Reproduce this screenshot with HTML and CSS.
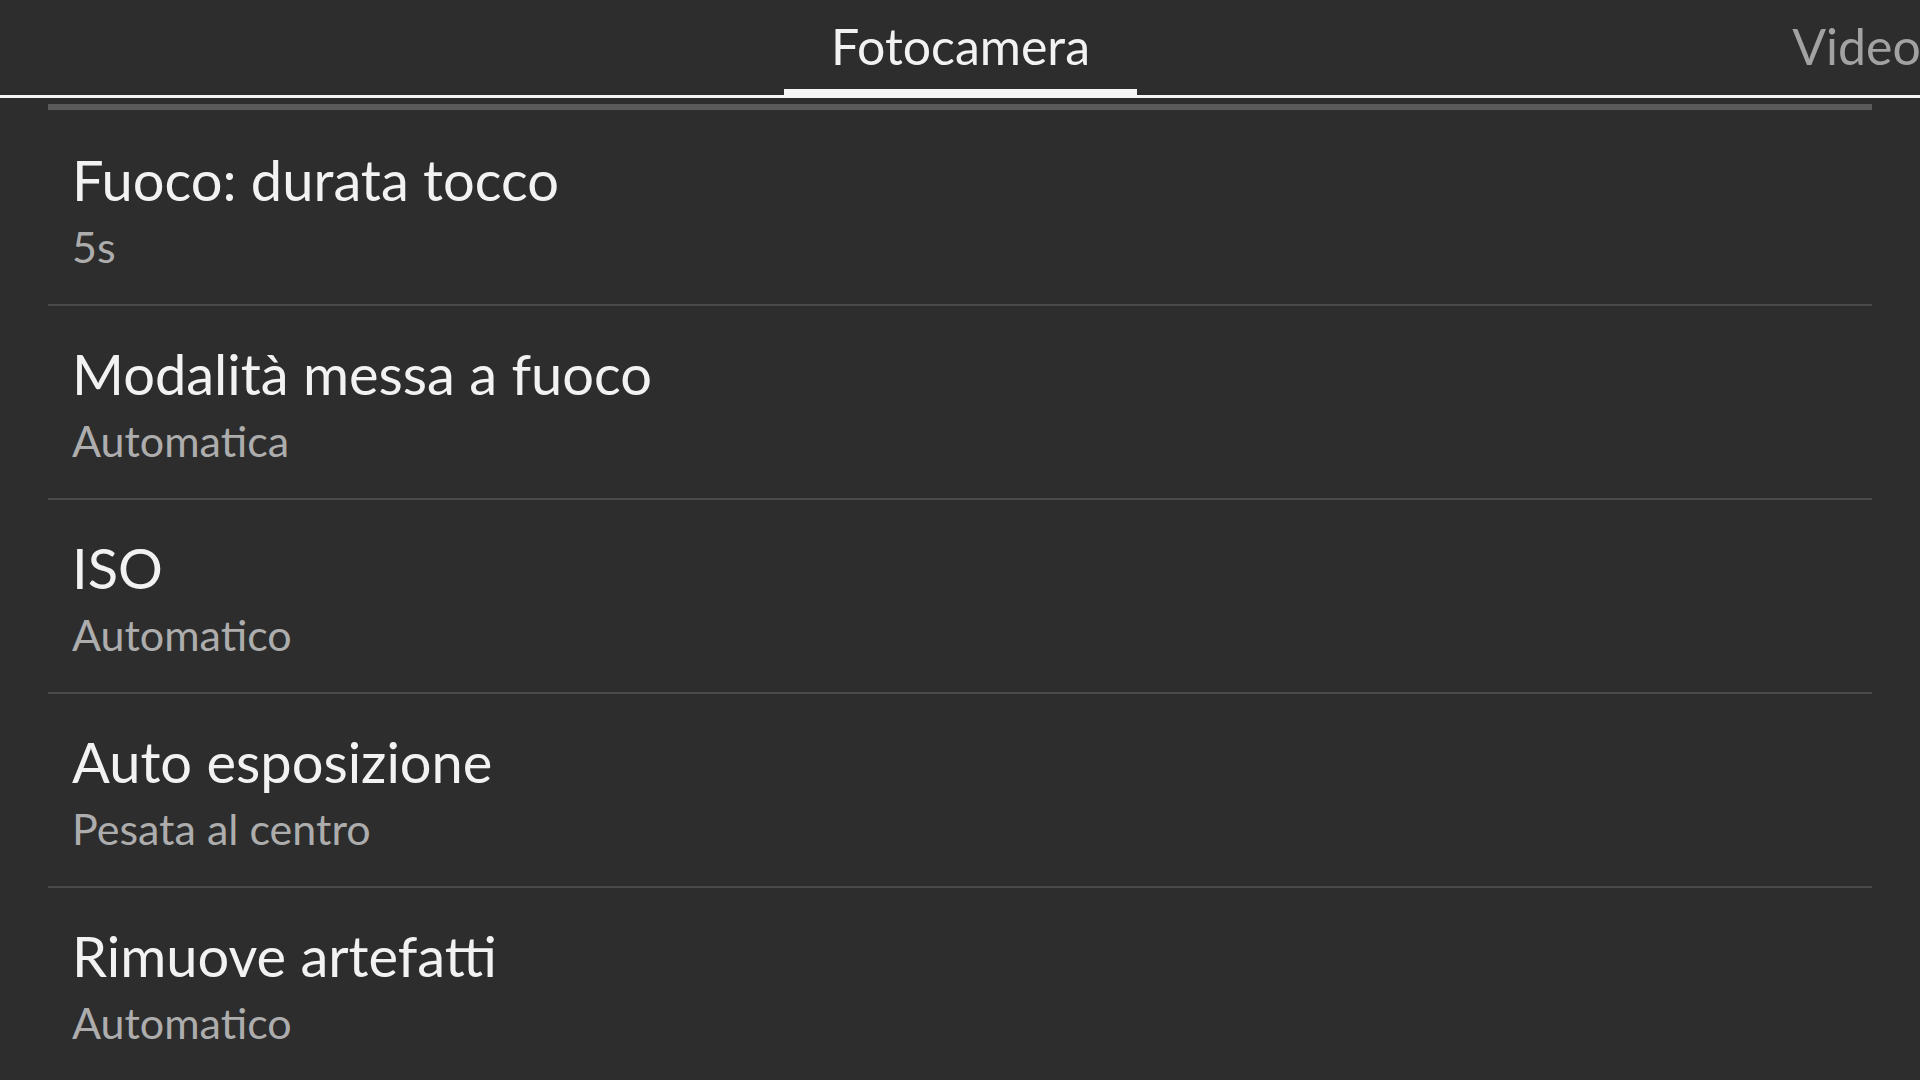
FILE: index.html
```html
<!DOCTYPE html>
<html lang="it">
<head>
<meta charset="utf-8">
<title>Impostazioni fotocamera</title>
<link rel="stylesheet" href="styles.css">
</head>
<body>
<header class="tabs">
  <div class="tab tab-active">Fotocamera</div>
  <div class="tab">Video</div>
</header>
<div class="scrollbar"></div>
<ul class="list">
  <li class="item">
    <div class="title">Fuoco: durata tocco</div>
    <div class="value">5s</div>
  </li>
  <li class="item">
    <div class="title">Modalità messa a fuoco</div>
    <div class="value">Automatica</div>
  </li>
  <li class="item">
    <div class="title">ISO</div>
    <div class="value">Automatico</div>
  </li>
  <li class="item">
    <div class="title">Auto esposizione</div>
    <div class="value">Pesata al centro</div>
  </li>
  <li class="item">
    <div class="title">Rimuove artefatti</div>
    <div class="value">Automatico</div>
  </li>
</ul>
</body>
</html>
```

FILE: styles.css
```css
html, body {
  margin: 0;
  padding: 0;
  height: 100%;
  overflow: hidden;
}

body {
  background-color: #2d2d2d;
  font-family: Lato, "Noto Sans", sans-serif;
  color: #f2f2f2;
}

.tabs {
  display: flex;
  height: 95px;
  border-bottom: 3px solid #f5f5f5;
  overflow: hidden;
  padding-left: 784px;
}

.tab {
  flex: 0 0 353px;
  box-sizing: border-box;
  height: 95px;
  padding-top: 16px;
  font-size: 50px;
  line-height: 60px;
  text-align: center;
  color: #a2a2a2;
  white-space: nowrap;
}

.tab + .tab {
  margin-left: 543px;
}

.tab-active {
  color: #f2f2f2;
  border-bottom: 6px solid #f5f5f5;
}

.scrollbar {
  height: 6px;
  margin: 6px 48px 2px;
  background-color: #5a5a5a;
}

.list {
  list-style: none;
  margin: 0 48px;
  padding: 0;
}

.item {
  padding: 34px 24px 31px;
  border-bottom: 2px solid #4a4a4a;
}

.title {
  font-size: 56px;
  line-height: 67px;
  color: #f2f2f2;
  white-space: nowrap;
}

.value {
  margin-top: 8px;
  font-size: 43px;
  line-height: 52px;
  color: #adadad;
  white-space: nowrap;
}
```
